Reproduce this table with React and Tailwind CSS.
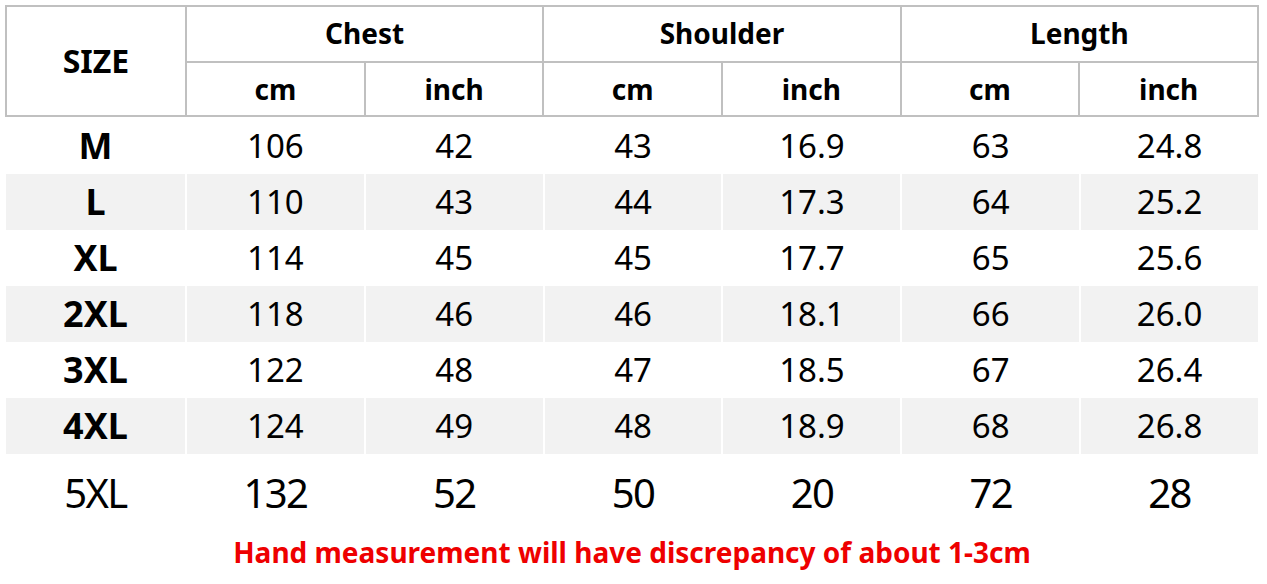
import React from 'react';

const rows = [
    ['M', '106', '42', '43', '16.9', '63', '24.8'],
    ['L', '110', '43', '44', '17.3', '64', '25.2'],
    ['XL', '114', '45', '45', '17.7', '65', '25.6'],
    ['2XL', '118', '46', '46', '18.1', '66', '26.0'],
    ['3XL', '122', '48', '47', '18.5', '67', '26.4'],
    ['4XL', '124', '49', '48', '18.9', '68', '26.8'],
];

const last = ['5XL', '132', '52', '50', '20', '72', '28'];

const font = { fontFamily: '"Noto Sans", "Open Sans", sans-serif' };

const App = () => {
    return (
        <div className="w-[1267px] h-[584px] bg-white text-black overflow-hidden pt-[5px] pl-[5px]" style={font}>
            {/* Header */}
            <div className="w-[1254px] grid grid-cols-[178px_repeat(6,minmax(0,1fr))] grid-rows-[54px_52px] gap-[2px] p-[2px] bg-[#c0c0c0]">
                <div className="row-span-2 bg-white flex items-center justify-center text-[32px] font-bold">SIZE</div>
                <div className="col-span-2 bg-white flex items-center justify-center pb-[3px] text-[28px] font-bold">Chest</div>
                <div className="col-span-2 bg-white flex items-center justify-center pb-[3px] text-[28px] font-bold">Shoulder</div>
                <div className="col-span-2 bg-white flex items-center justify-center pb-[3px] text-[28px] font-bold">Length</div>
                {['cm', 'inch', 'cm', 'inch', 'cm', 'inch'].map((u, i) => (
                    <div key={i} className="bg-white flex items-center justify-center text-[28px] font-bold">{u}</div>
                ))}
            </div>

            {/* Body */}
            <div className="w-[1254px] px-[1px] pt-[1px]">
                {rows.map((r, i) => (
                    <div key={r[0]} className="grid grid-cols-[179px_repeat(6,minmax(0,1fr))] gap-x-[2px] h-[56px]">
                        {r.map((v, j) => (
                            <div
                                key={j}
                                className={`flex items-center justify-center ${i % 2 === 1 ? 'bg-[#f2f2f2]' : 'bg-white'} ${j === 0 ? 'text-[36px] font-bold' : 'text-[33px]'}`}
                            >
                                {v}
                            </div>
                        ))}
                    </div>
                ))}
                <div className="grid grid-cols-[179px_repeat(6,minmax(0,1fr))] gap-x-[2px] h-[78px]">
                    {last.map((v, j) => (
                        <div key={j} className="flex items-center justify-center text-[40px] tracking-[-0.04em]">{v}</div>
                    ))}
                </div>
            </div>

            {/* Note */}
            <div className="w-[1254px] flex justify-center mt-[6px] text-[28px] font-bold text-[#ee0000] leading-none">
                Hand measurement will have discrepancy of about 1-3cm
            </div>
        </div>
    );
};

export default App;
